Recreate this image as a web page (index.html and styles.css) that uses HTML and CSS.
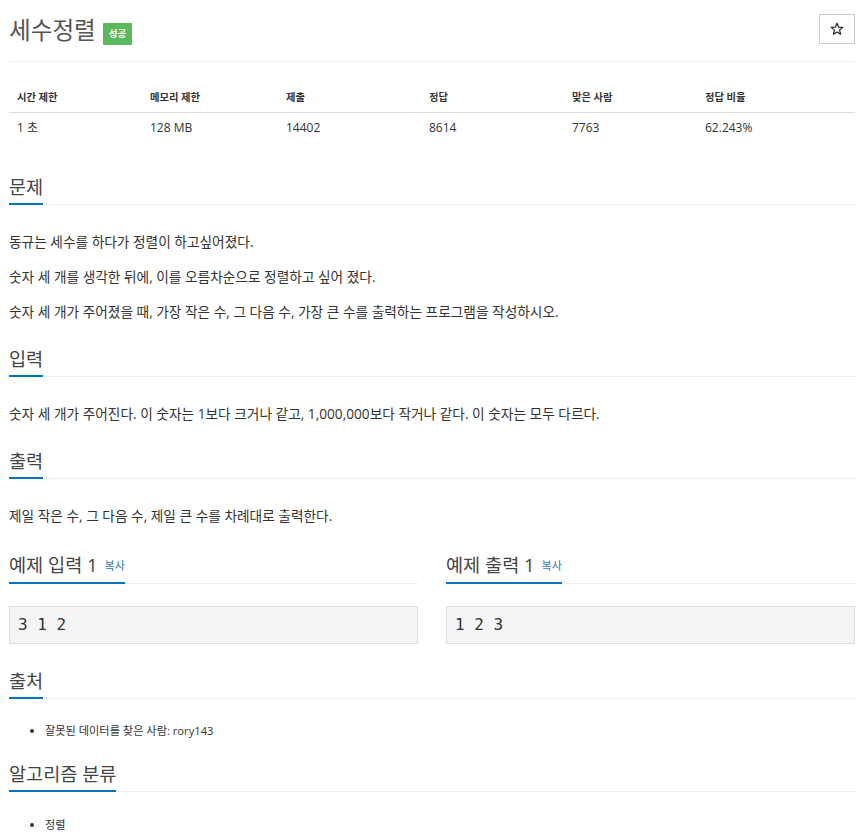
FILE: index.html
```html
<!DOCTYPE html>
<html lang="ko">
<head>
<meta charset="utf-8">
<title>세수정렬</title>
<link rel="stylesheet" href="styles.css">
</head>
<body>
<div class="container">
  <div class="page-header">
    <h1 class="title">세수정렬 <span class="badge">성공</span></h1>
    <button class="star" type="button" aria-label="즐겨찾기"><svg class="star-icon" viewBox="0 0 14 14" width="14" height="14"><path d="M7 1.2 L8.6 5.1 L12.8 5.4 L9.6 8.1 L10.6 12.2 L7 10 L3.4 12.2 L4.4 8.1 L1.2 5.4 L5.4 5.1 Z" fill="none" stroke="#222" stroke-width="1.2" stroke-linejoin="round"/></svg></button>
  </div>

  <table class="info">
    <thead>
      <tr>
        <th class="c1">시간 제한</th>
        <th class="c2">메모리 제한</th>
        <th class="c3">제출</th>
        <th class="c4">정답</th>
        <th class="c5">맞은 사람</th>
        <th class="c6">정답 비율</th>
      </tr>
    </thead>
    <tbody>
      <tr>
        <td>1 초</td>
        <td>128 MB</td>
        <td>14402</td>
        <td>8614</td>
        <td>7763</td>
        <td>62.243%</td>
      </tr>
    </tbody>
  </table>

  <section class="sec">
    <div class="headline"><h2>문제</h2></div>
    <div class="text">
      <p>동규는 세수를 하다가 정렬이 하고싶어졌다.</p>
      <p>숫자 세 개를 생각한 뒤에, 이를 오름차순으로 정렬하고 싶어 졌다.</p>
      <p>숫자 세 개가 주어졌을 때, 가장 작은 수, 그 다음 수, 가장 큰 수를 출력하는 프로그램을 작성하시오.</p>
    </div>
  </section>

  <section class="sec">
    <div class="headline"><h2>입력</h2></div>
    <div class="text">
      <p>숫자 세 개가 주어진다. 이 숫자는 1보다 크거나 같고, 1,000,000보다 작거나 같다. 이 숫자는 모두 다르다.</p>
    </div>
  </section>

  <section class="sec">
    <div class="headline"><h2>출력</h2></div>
    <div class="text">
      <p>제일 작은 수, 그 다음 수, 제일 큰 수를 차례대로 출력한다.</p>
    </div>
  </section>

  <div class="samples">
    <section class="sample">
      <div class="headline"><h2>예제 입력 1 <a class="copy" href="#">복사</a></h2></div>
      <pre class="sample-data">3 1 2</pre>
    </section>
    <section class="sample">
      <div class="headline"><h2>예제 출력 1 <a class="copy" href="#">복사</a></h2></div>
      <pre class="sample-data">1 2 3</pre>
    </section>
  </div>

  <section class="sec after-samples">
    <div class="headline list-head"><h2>출처</h2></div>
    <ul class="list">
      <li>잘못된 데이터를 찾은 사람: rory143</li>
    </ul>
  </section>

  <section class="sec after-list">
    <div class="headline list-head last-head"><h2>알고리즘 분류</h2></div>
    <ul class="list">
      <li>정렬</li>
    </ul>
  </section>
</div>
</body>
</html>
```

FILE: styles.css
```css
html, body {
  margin: 0;
  padding: 0;
  background: #fff;
}
body {
  font-family: "Open Sans", "Noto Sans CJK KR", sans-serif;
  color: #333;
  font-size: 13.7px;
}
.container {
  padding: 0 9px;
}
.page-header {
  display: flex;
  justify-content: space-between;
  align-items: flex-start;
  border-bottom: 1px solid #eee;
  padding-top: 14px;
  height: 47px;
}
.title {
  margin: 0;
  font-size: 23.6px;
  font-weight: 400;
  color: #555;
  line-height: 32px;
  display: flex;
  align-items: center;
}
.badge {
  display: inline-block;
  background: #5cb85c;
  color: #fff;
  font-size: 9.5px;
  font-weight: 700;
  line-height: 22px;
  height: 22px;
  padding: 0 6px;
  margin-left: 7px;
  margin-top: 8px;
  border-radius: 1px;
}
.star {
  width: 36px;
  height: 30px;
  border: 1px solid #ccc;
  background: #fff;
  padding: 0;
  display: flex;
  align-items: center;
  justify-content: center;
}
.star-icon {
  display: block;
}
.info {
  width: 100%;
  table-layout: fixed;
  border-collapse: collapse;
  margin-top: 20px;
  font-size: 12px;
}
.info th, .info td {
  text-align: left;
  padding: 8px;
  line-height: 14px;
  box-sizing: border-box;
}
.info th {
  font-weight: 700;
  font-size: 10.3px;
  border-bottom: 1px solid #ddd;
}
.c1 { width: 133px; }
.c2 { width: 136px; }
.c3 { width: 143px; }
.c4 { width: 143px; }
.c5 { width: 133px; }
.headline {
  border-bottom: 1px dotted #ddd;
  margin-bottom: 26px;
}
.headline h2 {
  display: inline-block;
  margin: 0 0 -1px 0;
  font-size: 18.6px;
  font-weight: 400;
  color: #444;
  line-height: 22px;
  padding-bottom: 5px;
  border-bottom: 2px solid #0076c0;
}
.sec {
  margin-top: 25px;
}
.info + .sec {
  margin-top: 33px;
}
.text p {
  margin: 0 0 13px 0;
  line-height: 22px;
}
.text p:last-child {
  margin-bottom: 0;
}
.samples {
  display: grid;
  grid-template-columns: 1fr 1fr;
  column-gap: 28px;
  margin-top: 27px;
}
.sample .headline {
  margin-bottom: 22px;
}
.copy {
  font-size: 11px;
  color: #337ab7;
  text-decoration: none;
  margin-left: 2px;
  vertical-align: 2px;
}
.sample-data {
  margin: 0;
  background: #f5f5f7;
  border: 1px solid #dcdce2;
  padding: 9px 8px;
  font-family: "DejaVu Sans Mono", monospace;
  font-size: 16px;
  line-height: 18px;
}
.after-samples {
  margin-top: 26px;
}
.after-list {
  margin-top: 24px;
}
.list-head {
  margin-bottom: 24px;
}
.last-head {
  margin-bottom: 25px;
}
.list {
  margin: 0;
  padding-left: 36px;
  font-size: 11.2px;
  line-height: 16px;
}
```
